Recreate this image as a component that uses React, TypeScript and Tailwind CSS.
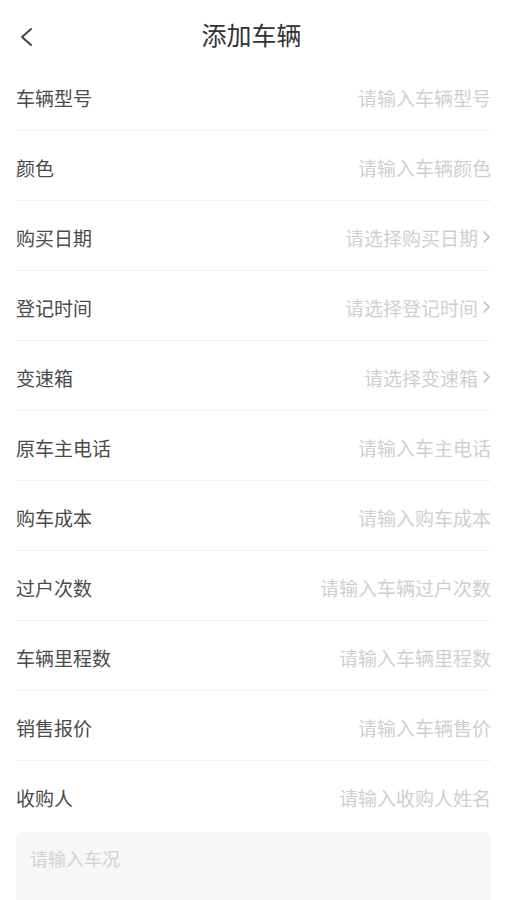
import React from "react";

const rows: { label: string; placeholder: string; arrow?: boolean }[] = [
  { label: "车辆型号", placeholder: "请输入车辆型号" },
  { label: "颜色", placeholder: "请输入车辆颜色" },
  { label: "购买日期", placeholder: "请选择购买日期", arrow: true },
  { label: "登记时间", placeholder: "请选择登记时间", arrow: true },
  { label: "变速箱", placeholder: "请选择变速箱", arrow: true },
  { label: "原车主电话", placeholder: "请输入车主电话" },
  { label: "购车成本", placeholder: "请输入购车成本" },
  { label: "过户次数", placeholder: "请输入车辆过户次数" },
  { label: "车辆里程数", placeholder: "请输入车辆里程数" },
  { label: "销售报价", placeholder: "请输入车辆售价" },
  { label: "收购人", placeholder: "请输入收购人姓名" },
];

export default function App() {
  return (
    <div
      className="w-[507px] h-[900px] bg-white overflow-hidden"
      style={{ fontFamily: '"Noto Sans CJK SC", "Noto Sans", sans-serif' }}
    >
      <div className="h-[61px] relative flex items-center justify-center">
        <svg
          className="absolute left-[18px] top-[26px]"
          width="16"
          height="22"
          viewBox="0 0 16 22"
          fill="none"
        >
          <path d="M13 3 L4 11 L13 19" stroke="#444" strokeWidth="2" strokeLinecap="round" strokeLinejoin="round" />
        </svg>
        <span className="text-[25px] text-[#333] leading-none mt-[8px] ml-[-4px]">添加车辆</span>
      </div>
      <div className="px-4">
        {rows.map((r, i) => (
          <div
            key={r.label}
            className={
              "h-[70px] flex items-center justify-between pt-[3px] " +
              (i < rows.length - 1 ? "border-b border-[#f2f2f2]" : "")
            }
          >
            <span className="text-[19px] text-[#4a4a4a] leading-none">{r.label}</span>
            <span className="flex items-center text-[19px] text-[#cfcfcf] leading-none">
              {r.placeholder}
              {r.arrow && (
                <svg className="ml-[4px]" width="9" height="14" viewBox="0 0 9 14" fill="none">
                  <path d="M2 2 L7 7 L2 12" stroke="#bdbdbd" strokeWidth="1.6" strokeLinecap="round" strokeLinejoin="round" />
                </svg>
              )}
            </span>
          </div>
        ))}
        <div className="mt-[1px] h-[90px] rounded-[7px] bg-[#f7f7f7] px-[14px] pt-[15px]">
          <span className="text-[18px] text-[#d2d2d2] leading-none">请输入车况</span>
        </div>
      </div>
    </div>
  );
}
